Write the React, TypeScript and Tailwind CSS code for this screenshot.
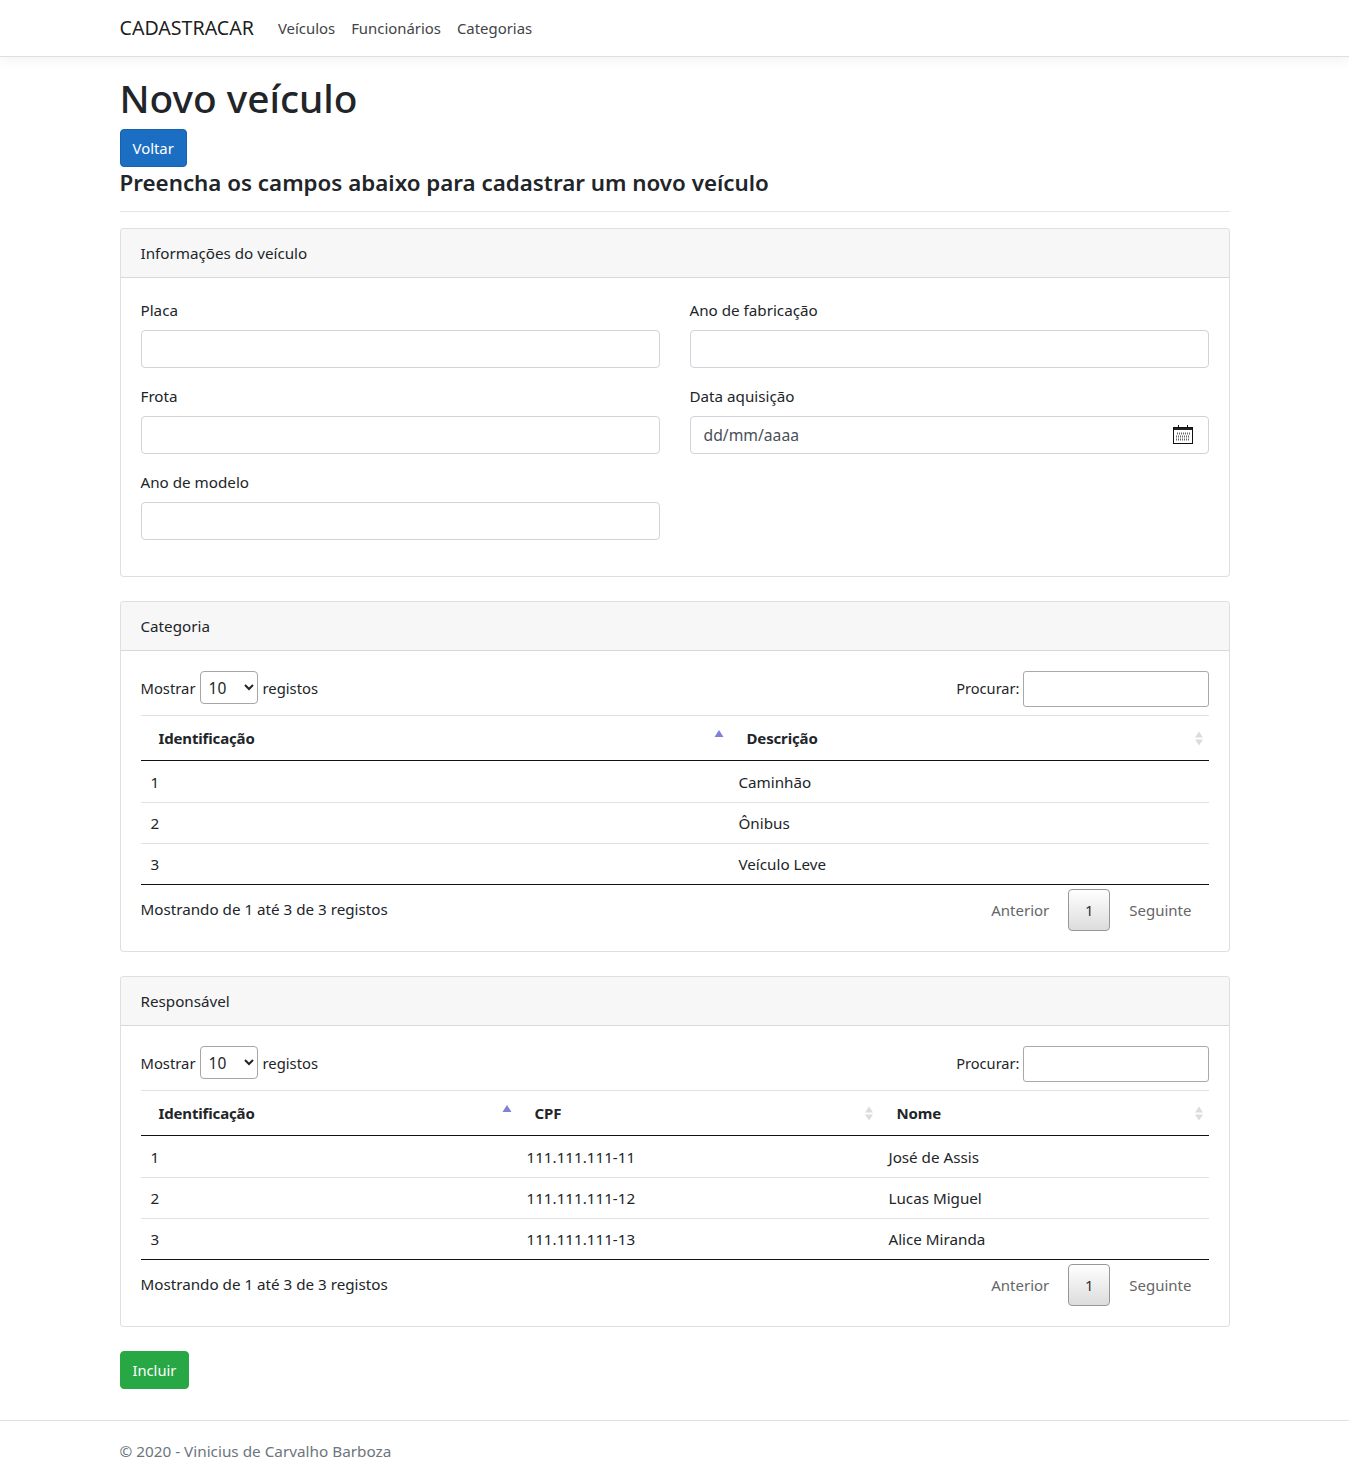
import React from "react";

interface Column {
  title: string;
  width: string;
}

const Field = ({ label, children }: { label: string; children?: React.ReactNode }) => {
  return (
    <div className="mb-4">
      <label className="block mb-2 leading-6">{label}</label>
      {children ?? (
        <input className="block w-full h-[38px] px-3 bg-white border border-[#ced4da] rounded" />
      )}
    </div>
  );
};

const Card = ({ title, children }: { title: string; children: React.ReactNode }) => {
  return (
    <div className="mb-6 border border-black/[.125] rounded bg-white">
      <div className="h-[49px] px-5 py-3 leading-6 bg-[#f7f7f7] border-b border-black/[.125] rounded-t">
        {title}
      </div>
      <div className="p-5">{children}</div>
    </div>
  );
};

const SortIcon = ({ active }: { active?: boolean }) => {
  if (active) {
    return (
      <svg className="absolute right-[5px] top-[13px]" width="10" height="9" viewBox="0 0 10 9">
        <path d="M5 1 L9.5 8 H0.5 Z" fill="#8080d8" />
      </svg>
    );
  }
  return (
    <svg className="absolute right-[5px] top-[15px]" width="10" height="15" viewBox="0 0 10 15">
      <path d="M5 0.5 L9 6.5 H1 Z M1 8.5 H9 L5 14.5 Z" fill="#dcdcdc" />
    </svg>
  );
};

const DataTable = ({ columns, rows }: { columns: Column[]; rows: string[][] }) => {
  return (
    <div>
      <div className="flex justify-between h-9 mb-2 text-[14.8px]">
        <div className="flex items-start leading-[34px]">
          Mostrar
          <select className="ml-1 mr-[5px] w-[58px] h-[33px] pl-1 border border-[#a6a6a6] rounded bg-white text-[15.5px]">
            <option>10</option>
          </select>
          registos
        </div>
        <div className="flex items-center">
          <span className="mr-[3px] text-[14.6px]">Procurar:</span>
          <input className="w-[186px] h-9 bg-white border border-[#a9a9a9] rounded-[3px]" />
        </div>
      </div>
      <table className="w-full table-fixed border-separate border-spacing-0 border-t border-[#dee2e6]">
        <colgroup>
          {columns.map((c) => (
            <col key={c.title} className={c.width} />
          ))}
        </colgroup>
        <thead>
          <tr>
            {columns.map((c, i) => (
              <th
                key={c.title}
                className="relative h-[45px] px-[18px] py-[10px] text-left text-[15px] tracking-[-0.01em] font-bold leading-6 border-b border-[#111111]"
              >
                {c.title}
                <SortIcon active={i === 0} />
              </th>
            ))}
          </tr>
        </thead>
        <tbody>
          {rows.map((row, r) => (
            <tr key={r}>
              {row.map((cell, i) => (
                <td
                  key={i}
                  className={
                    r === rows.length - 1
                      ? "px-[10px] py-2 leading-6 border-b border-[#111111]"
                      : r === 0
                        ? "px-[10px] pt-[9px] pb-2 leading-6 border-b border-[#dee2e6]"
                        : "px-[10px] py-2 leading-6 border-b border-[#dee2e6]"
                  }
                >
                  {cell}
                </td>
              ))}
            </tr>
          ))}
        </tbody>
      </table>
      <div className="flex justify-between">
        <div className="pt-3 leading-6">Mostrando de 1 até 3 de 3 registos</div>
        <div className="flex pt-1 text-[#666666] text-[15px] leading-6">
          <span className="px-4 py-2 border border-transparent">Anterior</span>
          <span className="ml-0.5 w-[42px] py-2 text-center text-[#333333] border border-[#979797] rounded-sm bg-gradient-to-b from-white to-[#dcdcdc]">
            1
          </span>
          <span className="ml-0.5 px-4 py-2 border border-transparent">Seguinte</span>
        </div>
      </div>
    </div>
  );
};

const CalendarIcon = () => {
  return (
    <svg width="20" height="19" viewBox="0 0 20 19" className="absolute right-[15px] top-[8px]">
      <rect x="0.5" y="2.5" width="19" height="16" fill="#fff" stroke="#111" />
      <rect x="1" y="3" width="18" height="2" fill="#222" />
      <path d="M5.5 0 V3 M14.5 0 V3" stroke="#111" strokeWidth="1" />
      <path
        d="M4 8.5 H17 M3 11.5 H17 M3 14.5 H17"
        stroke="#666"
        strokeWidth="2"
        strokeDasharray="1 1"
      />
    </svg>
  );
};

const App = () => {
  return (
    <div className="min-h-[1481px] bg-white text-[15.2px] text-[#212529] font-['Noto_Sans','Open_Sans',sans-serif]">
      <nav className="h-[57px] bg-white border-b border-[#dfdfe3] shadow-[0_4px_12px_rgba(0,0,0,0.05)]">
        <div className="w-[1110px] h-full mx-auto flex items-center">
          <span className="mr-4 text-[19.6px] text-black/90">CADASTRACAR</span>
          <a className="px-2 text-[14.9px] text-[#3f4448]">Veículos</a>
          <a className="px-2 text-[14.9px] text-[#3f4448]">Funcionários</a>
          <a className="px-2 text-[14.9px] text-[#3f4448]">Categorias</a>
        </div>
      </nav>
      <main className="w-[1110px] mx-auto pt-4">
        <h1 className="pt-px mb-[7px] text-[38.8px] font-medium leading-[48px]">Novo veículo</h1>
        <button className="block h-[38px] px-3 text-[14.9px] text-white bg-[#1b6ec2] border border-[#1861ac] rounded">
          Voltar
        </button>
        <h4 className="pt-[2px] text-[22.35px] font-semibold leading-[28px]">
          Preencha os campos abaixo para cadastrar um novo veículo
        </h4>
        <hr className="mt-[14px] mb-4 border-black/10" />
        <Card title="Informações do veículo">
          <div className="grid grid-cols-2 gap-x-[30px]">
            <Field label="Placa" />
            <Field label="Ano de fabricação" />
            <Field label="Frota" />
            <Field label="Data aquisição">
              <div className="relative h-[38px] pl-[13px] text-[15.7px] leading-[37px] text-[#495057] border border-[#ced4da] rounded">
                dd/mm/aaaa
                <CalendarIcon />
              </div>
            </Field>
            <Field label="Ano de modelo" />
          </div>
        </Card>
        <Card title="Categoria">
          <DataTable
            columns={[
              { title: "Identificação", width: "w-[588px]" },
              { title: "Descrição", width: "w-[480px]" },
            ]}
            rows={[
              ["1", "Caminhão"],
              ["2", "Ônibus"],
              ["3", "Veículo Leve"],
            ]}
          />
        </Card>
        <Card title="Responsável">
          <DataTable
            columns={[
              { title: "Identificação", width: "w-[376px]" },
              { title: "CPF", width: "w-[362px]" },
              { title: "Nome", width: "w-[330px]" },
            ]}
            rows={[
              ["1", "111.111.111-11", "José de Assis"],
              ["2", "111.111.111-12", "Lucas Miguel"],
              ["3", "111.111.111-13", "Alice Miranda"],
            ]}
          />
        </Card>
        <button className="block h-[38px] px-3 text-[14.7px] text-white bg-[#28a745] border border-[#28a745] rounded">
          Incluir
        </button>
      </main>
      <footer className="mt-[31px] h-[61px] border-t border-[#dee2e6] text-[15.3px] text-[#6c757d] leading-[60px]">
        <div className="w-[1110px] mx-auto">© 2020 - Vinicius de Carvalho Barboza</div>
      </footer>
    </div>
  );
};

export default App;
